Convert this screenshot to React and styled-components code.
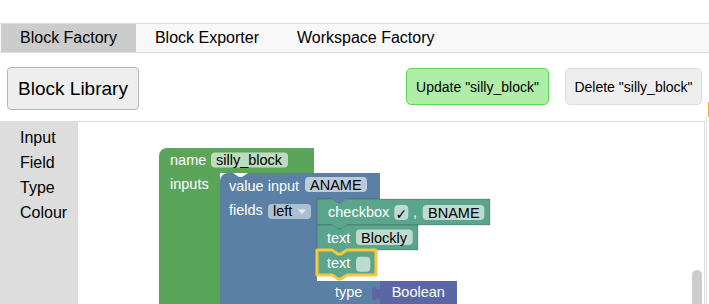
import React from "react";
import styled, { createGlobalStyle } from "styled-components";

const Global = createGlobalStyle`
  html, body { margin: 0; padding: 0; background: #fff; }
  body { font-family: "Liberation Sans", Arial, Helvetica, sans-serif; color: #000; }
  #root { width: 709px; height: 304px; overflow: hidden; }
`;

const Page = styled.div`
  width: 709px;
  height: 304px;
  padding-top: 23px;
  box-sizing: border-box;
  display: flex;
  flex-direction: column;
  overflow: hidden;
`;

const TabBar = styled.div`
  display: flex;
  height: 28px;
  background: #f8f8f8;
  border-top: 1px solid #dedede;
  border-bottom: 1px solid #dedede;
  padding-left: 1px;
`;

const Tab = styled.div`
  padding: 0 19px;
  line-height: 28px;
  font-size: 16px;
  background: ${(p) => (p.$active ? "#cccccc" : "transparent")};
  white-space: nowrap;
`;

const Body = styled.div`
  flex: 1;
  display: grid;
  grid-template-columns: 705px 1fr;
  min-height: 0;
`;

const MainCol = styled.div`
  display: flex;
  flex-direction: column;
  min-height: 0;
`;

const Toolbar = styled.div`
  height: 68px;
  box-sizing: border-box;
  padding: 14px 3px 0 7px;
  display: flex;
  align-items: flex-start;
  gap: 16px;
`;

const LibraryButton = styled.button`
  width: 132px;
  height: 43px;
  background: #eeeeee;
  border: 1px solid #b4b4b4;
  border-radius: 4px;
  font-family: "Liberation Sans", Arial, sans-serif;
  font-size: 19px;
  padding: 1px 0 0;
  color: #000;
`;

const Spacer = styled.div`
  flex: 1;
`;

const ActionButton = styled.button`
  width: ${(p) => p.$w}px;
  height: 37px;
  margin-top: 1px;
  background: ${(p) => (p.$primary ? "#aeeea8" : "#eeeeee")};
  border: 1px solid ${(p) => (p.$primary ? "#5cd94f" : "#dddddd")};
  border-radius: 5px;
  font-family: "Liberation Sans", Arial, sans-serif;
  font-size: 14px;
  padding: 0;
  color: #000;
`;

const WorkspaceArea = styled.div`
  flex: 1;
  display: flex;
  border-top: 1px solid #dedede;
  min-height: 0;
`;

const Toolbox = styled.div`
  width: 78px;
  background: #dddddd;
  padding-top: 3px;
  box-sizing: border-box;
`;

const ToolboxItem = styled.div`
  height: 25px;
  line-height: 25px;
  padding-left: 20px;
  font-size: 16px;
`;

const Workspace = styled.div`
  position: relative;
  flex: 1;
  background: #fff;
  border-right: 1px solid #dedede;
  overflow: hidden;
`;

const BlockCanvas = styled.svg`
  display: block;
  width: 100%;
  height: 100%;
  overflow: visible;
`;

const ScrollThumb = styled.div`
  position: absolute;
  left: 614px;
  top: 148px;
  width: 10px;
  height: 80px;
  border-radius: 5px;
  background: #cccccc;
`;

const SideCol = styled.div`
  display: flex;
  flex-direction: column;
  padding-left: 1px;
  padding-top: 49px;
`;

const OrangeMark = styled.div`
  height: 15px;
  margin-left: 2px;
  border-left: 2px solid #e8a95a;
`;

const SideFrame = styled.div`
  flex: 1;
  border-left: 1px solid #dedede;
`;

const GREEN = "#5ba55b";
const BLUE = "#5b80a5";
const TEAL = "#5ba58c";
const PURPLE = "#5b67a5";

const Label = ({ x, y, children, dark }) => (
  <text
    x={x}
    y={y}
    fill={dark ? "#000" : "#fff"}
    fontFamily='"Liberation Sans", Arial, sans-serif'
    fontSize="14.5"
  >
    {children}
  </text>
);

const Field = ({ x, y, w, h = 15, op = 0.6 }) => (
  <rect x={x} y={y} width={w} height={h} rx="4" ry="4" fill="#fff" fillOpacity={op} />
);

function Blocks() {
  return (
    <BlockCanvas>
      <g transform="translate(-78 -122)">
        {/* factory base block */}
        <path d="M159,156 a8,8 0 0 1 8,-8 H314 V173 H220 V330 H159 Z" fill={GREEN} />
        <Field x={211} y={152.5} w={77} />
        <Label x={170} y={165}>name</Label>
        <Label x={216} y={165} dark>silly_block</Label>
        <Label x={170} y={189.3}>inputs</Label>

        {/* value input block */}
        <path
          d="M220,181 a8,8 0 0 1 8,-8 H233 l6,4 h3 l6,-4 H380 V199 H347 l-6,4 h-3 l-6,-4 H317 V281 H380 V330 H220 Z"
          fill={BLUE}
        />
        <Label x={229} y={190.7}>value input</Label>
        <Field x={305} y={177} w={62} />
        <Label x={310} y={190.3} dark>ANAME</Label>
        <Label x={229} y={215}>fields</Label>
        <Field x={268} y={204} w={43} op={0.5} />
        <Label x={273} y={216} dark>left</Label>
        <polygon points="298,209.5 306,209.5 302,214" fill="#e3e9f0" />
        <Label x={335} y={296.7}>type</Label>

        {/* checkbox field block */}
        <path
          d="M317,199 H332 l6,4 h3 l6,-4 H490 V225 H347 l-6,4 h-3 l-6,-4 H317 Z"
          fill={TEAL}
          stroke="rgba(0,0,0,0.18)"
          strokeWidth="1"
        />
        <Label x={328} y={216.7}>checkbox</Label>
        <Field x={394.3} y={205} w={14} />
        <text x={395.5} y={218.5} fontFamily='"DejaVu Sans", sans-serif' fontSize="14" fontWeight="bold" fill="#000">
          ✓
        </text>
        <Label x={413} y={216.7}>,</Label>
        <Field x={422.7} y={205} w={61.6} />
        <Label x={428} y={217.7} dark>BNAME</Label>

        {/* text Blockly block */}
        <path
          d="M317,225 H332 l6,4 h3 l6,-4 H418 V250 H347 l-6,4 h-3 l-6,-4 H317 Z"
          fill={TEAL}
          stroke="rgba(0,0,0,0.18)"
          strokeWidth="1"
        />
        <Label x={327} y={243.3}>text</Label>
        <Field x={356} y={229.5} w={56.7} h={15.5} />
        <Label x={361} y={242.8} dark>Blockly</Label>

        {/* selected text block */}
        <path
          d="M317,250 H332 l6,4 h3 l6,-4 H376 V275 H347 l-6,4 h-3 l-6,-4 H317 Z"
          fill={TEAL}
          stroke="#fcc83a"
          strokeWidth="3"
          strokeLinejoin="round"
        />
        <Label x={327} y={268.3}>text</Label>
        <Field x={356} y={256.7} w={14.3} />

        {/* Boolean type block */}
        <path
          d="M380,281 H457 V330 H380 V301 c0,-10 -8,8 -8,-7.5 s8,2.5 8,-7.5 Z"
          fill={PURPLE}
        />
        <Label x={391.7} y={297.3}>Boolean</Label>
      </g>
    </BlockCanvas>
  );
}

export default function App() {
  return (
    <>
      <Global />
      <Page>
        <TabBar>
          <Tab $active>Block Factory</Tab>
          <Tab>Block Exporter</Tab>
          <Tab>Workspace Factory</Tab>
        </TabBar>
        <Body>
          <MainCol>
            <Toolbar>
              <LibraryButton>Block Library</LibraryButton>
              <Spacer />
              <ActionButton $primary $w={143}>
                Update "silly_block"
              </ActionButton>
              <ActionButton $w={137}>Delete "silly_block"</ActionButton>
            </Toolbar>
            <WorkspaceArea>
              <Toolbox>
                <ToolboxItem>Input</ToolboxItem>
                <ToolboxItem>Field</ToolboxItem>
                <ToolboxItem>Type</ToolboxItem>
                <ToolboxItem>Colour</ToolboxItem>
              </Toolbox>
              <Workspace>
                <Blocks />
                <ScrollThumb />
              </Workspace>
            </WorkspaceArea>
          </MainCol>
          <SideCol>
            <OrangeMark />
            <SideFrame />
          </SideCol>
        </Body>
      </Page>
    </>
  );
}
